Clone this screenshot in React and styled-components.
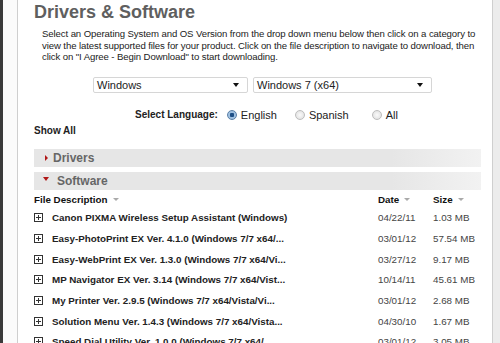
import React from "react";
import styled, { createGlobalStyle } from "styled-components";

const Global = createGlobalStyle`
  html, body { margin: 0; padding: 0; background: #fff; }
  body { font-family: "Liberation Sans", Arial, sans-serif; color: #222; }
`;

const Frame = styled.div`
  display: flex;
  width: 500px;
  height: 343px;
  overflow: hidden;
`;

const DarkEdge = styled.div`
  width: 3px;
  background: #3a3a3a;
`;

const Gutter = styled.div`
  width: ${(p) => p.w}px;
  background: ${(p) => p.bg};
  border-${(p) => p.side}: 1px solid #cfcfcf;
`;

const Main = styled.main`
  flex: 1;
  background: #fff;
  padding: 0 0 0 16px;
  display: flex;
  flex-direction: column;
`;

const Title = styled.h1`
  margin: 0;
  padding-top: 1px;
  font-size: 18px;
  line-height: 22px;
  font-weight: bold;
  color: #5f5f5f;
`;

const Intro = styled.p`
  margin: 5px 0 0 8px;
  font-size: 9.6px;
  letter-spacing: -0.1px;
  line-height: 11.5px;
  color: #222;
  white-space: nowrap;
`;

const SelectRow = styled.div`
  display: flex;
  gap: 5px;
  margin: 14px 0 0 59px;
`;

const Select = styled.div`
  width: ${(p) => p.w}px;
  height: 16px;
  box-sizing: border-box;
  border: 1px solid #d6d6d6;
  border-radius: 2px;
  background: #fff;
  display: flex;
  align-items: center;
  justify-content: space-between;
  padding: 0 8px 0 3px;
  font-size: 11px;
  color: #222;
`;

const Caret = styled.span`
  width: 0;
  height: 0;
  border-left: 3px solid transparent;
  border-right: 3px solid transparent;
  border-top: 4px solid #111;
`;

const LangRow = styled.div`
  display: flex;
  align-items: center;
  margin: 16px 0 0 101px;
  height: 14px;
  font-size: 11px;
`;

const LangLabel = styled.span`
  font-weight: bold;
  font-size: 10px;
  margin-right: 9px;
`;

const Option = styled.label`
  display: flex;
  align-items: center;
  margin-right: ${(p) => p.mr}px;
  color: #222;
`;

const Radio = styled.span`
  width: 10px;
  height: 10px;
  border-radius: 50%;
  box-sizing: border-box;
  border: 1px solid ${(p) => (p.on ? "#5b7fa6" : "#bdbdbd")};
  background: ${(p) =>
    p.on
      ? "radial-gradient(circle, #1f4f86 0 2px, #9fc0e0 2.5px)"
      : "radial-gradient(circle, #fafafa 0, #dcdcdc 100%)"};
  margin-right: 4px;
`;

const ShowAll = styled.div`
  font-size: 10px;
  font-weight: bold;
  margin-top: 4px;
  height: 12px;
  line-height: 12px;
`;

const Bar = styled.div`
  margin-top: ${(p) => p.mt}px;
  width: 447px;
  height: 18px;
  flex: none;
  background: linear-gradient(to right, #e6e6e6 80%, #f2f2f2);
  display: flex;
  align-items: center;
  padding-left: ${(p) => p.pl}px;
  box-sizing: border-box;
  font-size: 12px;
  font-weight: bold;
  color: #666;
`;

const TriRight = styled.span`
  width: 0;
  height: 0;
  border-top: 3px solid transparent;
  border-bottom: 3px solid transparent;
  border-left: 3px solid #b01818;
  margin-right: 5px;
`;

const TriDown = styled.span`
  width: 0;
  height: 0;
  border-left: 3px solid transparent;
  border-right: 3px solid transparent;
  border-top: 4px solid #b01818;
  margin: -3px 8px 0 0;
`;

const Table = styled.div`
  display: grid;
  grid-template-columns: 344px 55px 1fr;
  font-size: 9.8px;
  margin-top: 1px;
`;

const Head = styled.div`
  font-weight: bold;
  height: 17px;
  color: #111;
  display: flex;
  align-items: center;
`;

const SortMark = styled.span`
  width: 0;
  height: 0;
  border-left: 3px solid transparent;
  border-right: 3px solid transparent;
  border-top: 3px solid #aaa;
  margin-left: 5px;
  margin-top: 1px;
`;

const Name = styled.div`
  display: flex;
  align-items: center;
  height: 20.7px;
  font-weight: bold;
  color: #222;
  white-space: nowrap;
`;

const Plus = styled.span`
  width: 7px;
  height: 7px;
  border: 1px solid #333;
  position: relative;
  margin-right: 9px;
  flex: none;
  &::before, &::after {
    content: "";
    position: absolute;
    background: #333;
  }
  &::before { left: 1px; right: 1px; top: 3px; height: 1px; }
  &::after { top: 1px; bottom: 1px; left: 3px; width: 1px; }
`;

const Cell = styled.div`
  height: 20.7px;
  display: flex;
  align-items: center;
  color: #444;
`;

const files = [
  ["Canon PIXMA Wireless Setup Assistant (Windows)", "04/22/11", "1.03 MB"],
  ["Easy-PhotoPrint EX Ver. 4.1.0 (Windows 7/7 x64/...", "03/01/12", "57.54 MB"],
  ["Easy-WebPrint EX Ver. 1.3.0 (Windows 7/7 x64/Vi...", "03/27/12", "9.17 MB"],
  ["MP Navigator EX Ver. 3.14 (Windows 7/7 x64/Vist...", "10/14/11", "45.61 MB"],
  ["My Printer Ver. 2.9.5 (Windows 7/7 x64/Vista/Vi...", "03/01/12", "2.68 MB"],
  ["Solution Menu Ver. 1.4.3 (Windows 7/7 x64/Vista...", "04/30/10", "1.67 MB"],
  ["Speed Dial Utility Ver. 1.0.0 (Windows 7/7 x64/...", "03/01/12", "3.05 MB"],
];

export default function App() {
  return (
    <>
      <Global />
      <Frame>
        <DarkEdge />
        <Gutter w={14} bg="#fbfbfb" side="right" />
        <Main>
          <Title>Drivers &amp; Software</Title>
          <Intro>
            Select an Operating System and OS Version from the drop down menu below then click on a category to<br />
            view the latest supported files for your product. Click on the file description to navigate to download, then<br />
            click on "I Agree - Begin Download" to start downloading.
          </Intro>
          <SelectRow>
            <Select w={155}>Windows<Caret /></Select>
            <Select w={179}>Windows 7 (x64)<Caret /></Select>
          </SelectRow>
          <LangRow>
            <LangLabel>Select Language:</LangLabel>
            <Option mr={18}><Radio on />English</Option>
            <Option mr={23}><Radio />Spanish</Option>
            <Option mr={0}><Radio />All</Option>
          </LangRow>
          <ShowAll>Show All</ShowAll>
          <Bar mt={12} pl={11}><TriRight />Drivers</Bar>
          <Bar mt={5} pl={9}><TriDown />Software</Bar>
          <Table>
            <Head>File Description<SortMark /></Head>
            <Head>Date<SortMark /></Head>
            <Head>Size<SortMark /></Head>
            {files.map(([n, d, s]) => (
              <React.Fragment key={n}>
                <Name><Plus />{n}</Name>
                <Cell>{d}</Cell>
                <Cell>{s}</Cell>
              </React.Fragment>
            ))}
          </Table>
        </Main>
        <Gutter w={7} bg="#ececec" side="left" />
      </Frame>
    </>
  );
}
